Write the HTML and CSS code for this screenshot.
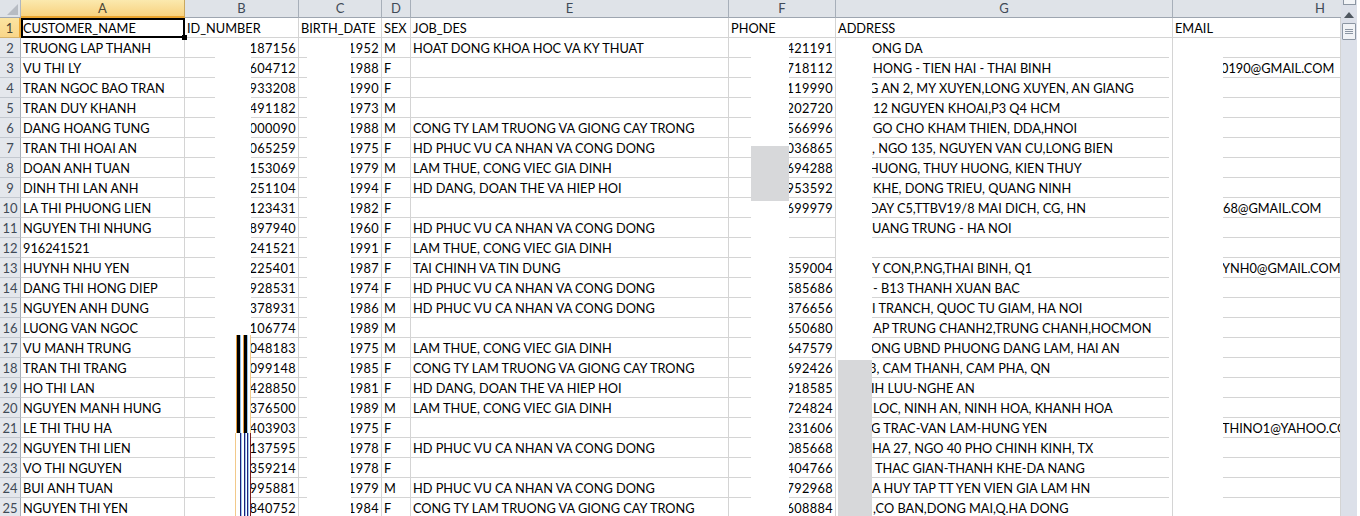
FILE: index.html
```html
<!DOCTYPE html>
<html lang="vi">
<head>
<meta charset="utf-8">
<title>Customer sheet</title>
<link rel="stylesheet" href="styles.css">
</head>
<body>
<div class="window">
  <div class="sheet">
    <table class="grid">
      <colgroup>
        <col class="c-row"><col class="c-a"><col class="c-b"><col class="c-c"><col class="c-d"><col class="c-e"><col class="c-f"><col class="c-g"><col class="c-h">
      </colgroup>
      <thead>
        <tr>
          <th class="corner"><span class="corner-mark"></span></th>
          <th class="active">A</th><th>B</th><th>C</th><th>D</th><th>E</th><th>F</th><th>G</th><th class="right">H</th>
        </tr>
      </thead>
      <tbody>
        <tr><th class="active">1</th><td>CUSTOMER_NAME</td><td>ID_NUMBER</td><td>BIRTH_DATE</td><td>SEX</td><td>JOB_DES</td><td>PHONE</td><td>ADDRESS</td><td>EMAIL</td></tr>
        <tr><th>2</th><td>TRUONG LAP THANH</td><td class="num">0187156</td><td class="num">1952</td><td>M</td><td>HOAT DONG KHOA HOC VA KY THUAT</td><td class="num">8421191</td><td class="addr s1">ONG DA</td><td></td></tr>
        <tr><th>3</th><td>VU THI LY</td><td class="num">1604712</td><td class="num">1988</td><td>F</td><td></td><td class="num">2718112</td><td class="addr">HONG - TIEN HAI - THAI BINH</td><td class="mail s2">0190@GMAIL.COM</td></tr>
        <tr><th>4</th><td>TRAN NGOC BAO TRAN</td><td class="num">1933208</td><td class="num">1990</td><td>F</td><td></td><td class="num">8119990</td><td class="addr s4">G AN 2, MY XUYEN,LONG XUYEN, AN GIANG</td><td></td></tr>
        <tr><th>5</th><td>TRAN DUY KHANH</td><td class="num">2491182</td><td class="num">1973</td><td>M</td><td></td><td class="num">8202720</td><td class="addr">12 NGUYEN KHOAI,P3 Q4 HCM</td><td></td></tr>
        <tr><th>6</th><td>DANG HOANG TUNG</td><td class="num">3000090</td><td class="num">1988</td><td>M</td><td>CONG TY LAM TRUONG VA GIONG CAY TRONG</td><td class="num">5566996</td><td class="addr">GO CHO KHAM THIEN, DDA,HNOI</td><td></td></tr>
        <tr><th>7</th><td>TRAN THI HOAI AN</td><td class="num">2065259</td><td class="num">1975</td><td>F</td><td>HD PHUC VU CA NHAN VA CONG DONG</td><td class="num">8036865</td><td class="addr s1">, NGO 135, NGUYEN VAN CU,LONG BIEN</td><td></td></tr>
        <tr><th>8</th><td>DOAN ANH TUAN</td><td class="num">1153069</td><td class="num">1979</td><td>M</td><td>LAM THUE, CONG VIEC GIA DINH</td><td class="num">5694288</td><td class="addr s4">HUONG, THUY HUONG, KIEN THUY</td><td></td></tr>
        <tr><th>9</th><td>DINH THI LAN ANH</td><td class="num">1251104</td><td class="num">1994</td><td>F</td><td>HD DANG, DOAN THE VA HIEP HOI</td><td class="num">8953592</td><td class="addr">KHE, DONG TRIEU, QUANG NINH</td><td></td></tr>
        <tr><th>10</th><td>LA THI PHUONG LIEN</td><td class="num">2123431</td><td class="num">1982</td><td>F</td><td></td><td class="num">5699979</td><td class="addr s4">DAY C5,TTBV19/8 MAI DICH, CG, HN</td><td class="mail">68@GMAIL.COM</td></tr>
        <tr><th>11</th><td>NGUYEN THI NHUNG</td><td class="num">1897940</td><td class="num">1960</td><td>F</td><td>HD PHUC VU CA NHAN VA CONG DONG</td><td></td><td class="addr s1">UANG TRUNG - HA NOI</td><td></td></tr>
        <tr><th>12</th><td>916241521</td><td class="num">6241521</td><td class="num">1991</td><td>F</td><td>LAM THUE, CONG VIEC GIA DINH</td><td></td><td></td><td></td></tr>
        <tr><th>13</th><td>HUYNH NHU YEN</td><td class="num">1225401</td><td class="num">1987</td><td>F</td><td>TAI CHINH VA TIN DUNG</td><td class="num">7359004</td><td class="addr s1">Y CON,P.NG,THAI BINH, Q1</td><td class="mail s1">YNH0@GMAIL.COM</td></tr>
        <tr><th>14</th><td>DANG THI HONG DIEP</td><td class="num">2928531</td><td class="num">1974</td><td>F</td><td>HD PHUC VU CA NHAN VA CONG DONG</td><td class="num">5585686</td><td class="addr">- B13 THANH XUAN BAC</td><td></td></tr>
        <tr><th>15</th><td>NGUYEN ANH DUNG</td><td class="num">2378931</td><td class="num">1986</td><td>M</td><td>HD PHUC VU CA NHAN VA CONG DONG</td><td class="num">2876656</td><td class="addr s1">I TRANCH, QUOC TU GIAM, HA NOI</td><td></td></tr>
        <tr><th>16</th><td>LUONG VAN NGOC</td><td class="num">1106774</td><td class="num">1989</td><td>M</td><td></td><td class="num">5650680</td><td class="addr">AP TRUNG CHANH2,TRUNG CHANH,HOCMON</td><td></td></tr>
        <tr><th>17</th><td>VU MANH TRUNG</td><td class="num">1048183</td><td class="num">1975</td><td>M</td><td>LAM THUE, CONG VIEC GIA DINH</td><td class="num">4647579</td><td class="addr s2">ONG UBND PHUONG DANG LAM, HAI AN</td><td></td></tr>
        <tr><th>18</th><td>TRAN THI TRANG</td><td class="num">1099148</td><td class="num">1985</td><td>F</td><td>CONG TY LAM TRUONG VA GIONG CAY TRONG</td><td class="num">5692426</td><td class="addr s4">3, CAM THANH, CAM PHA, QN</td><td></td></tr>
        <tr><th>19</th><td>HO THI LAN</td><td class="num">2428850</td><td class="num">1981</td><td>F</td><td>HD DANG, DOAN THE VA HIEP HOI</td><td class="num">7918585</td><td class="addr s2">IH LUU-NGHE AN</td><td></td></tr>
        <tr><th>20</th><td>NGUYEN MANH HUNG</td><td class="num">6376500</td><td class="num">1989</td><td>M</td><td>LAM THUE, CONG VIEC GIA DINH</td><td class="num">2724824</td><td class="addr">LOC, NINH AN, NINH HOA, KHANH HOA</td><td></td></tr>
        <tr><th>21</th><td>LE THI THU HA</td><td class="num">5403903</td><td class="num">1975</td><td>F</td><td></td><td class="num">8231606</td><td class="addr s2">G TRAC-VAN LAM-HUNG YEN</td><td class="mail s1">THINO1@YAHOO.COM</td></tr>
        <tr><th>22</th><td>NGUYEN THI LIEN</td><td class="num">2137595</td><td class="num">1978</td><td>F</td><td>HD PHUC VU CA NHAN VA CONG DONG</td><td class="num">3085668</td><td class="addr s1">HA 27, NGO 40 PHO CHINH KINH, TX</td><td></td></tr>
        <tr><th>23</th><td>VO THI NGUYEN</td><td class="num">1359214</td><td class="num">1978</td><td>F</td><td></td><td class="num">5404766</td><td class="addr s-2">THAC GIAN-THANH KHE-DA NANG</td><td></td></tr>
        <tr><th>24</th><td>BUI ANH TUAN</td><td class="num">1995881</td><td class="num">1979</td><td>M</td><td>HD PHUC VU CA NHAN VA CONG DONG</td><td class="num">2792968</td><td class="addr s1">A HUY TAP TT YEN VIEN GIA LAM HN</td><td></td></tr>
        <tr><th>25</th><td>NGUYEN THI YEN</td><td class="num">1840752</td><td class="num">1984</td><td>F</td><td>CONG TY LAM TRUONG VA GIONG CAY TRONG</td><td class="num">4608884</td><td class="addr">,CO BAN,DONG MAI,Q.HA DONG</td><td></td></tr>
      </tbody>
    </table>

    <div class="cover cover-b"></div>
    <div class="cover cover-c"></div>
    <div class="cover cover-f"></div>
    <div class="cover cover-g"></div>
    <div class="cover cover-g2"></div>
    <div class="cover cover-h"></div>
    <div class="gray gray-f"></div>
    <div class="gray gray-g"></div>
    <div class="bars bars-top"><i></i><i></i></div>
    <div class="bars-low"></div>

    <div class="selection"><span class="handle"></span></div>
  </div>

  <div class="scrollbar">
    <div class="split"></div>
    <svg class="arrow" width="10" height="6" viewBox="0 0 10 6"><path d="M5 0 L10 6 L0 6 Z" fill="#4f5760"/></svg>
    <div class="thumb"><i></i><i></i><i></i></div>
  </div>
</div>
</body>
</html>
```

FILE: styles.css
```css
html, body {
  margin: 0;
  padding: 0;
  height: 516px;
  overflow: hidden;
  background: #fff;
}

.window {
  display: flex;
  width: 1360px;
  height: 516px;
  overflow: hidden;
  font-family: Lato, "Liberation Sans", sans-serif;
  font-size: 12.75px;
  color: #000;
}

.sheet {
  position: relative;
  width: 1341px;
  height: 516px;
  overflow: hidden;
  flex: none;
}

.grid {
  table-layout: fixed;
  border-collapse: separate;
  border-spacing: 0;
  width: 1341px;
}

.c-row { width: 21px; }
.c-a { width: 164px; }
.c-b { width: 114px; }
.c-c { width: 83px; }
.c-d { width: 29px; }
.c-e { width: 318px; }
.c-f { width: 107px; }
.c-g { width: 337px; }
.c-h { width: 168px; }

thead th {
  height: 17px;
  padding: 0;
  background: #dfe3e8;
  border-right: 1px solid #a7afb9;
  border-bottom: 1px solid #9ea6b0;
  font-weight: 400;
  font-size: 13px;
  color: #3f4a57;
  text-align: center;
  line-height: 17px;
}

thead th.right {
  border-right: 0;
  text-align: right;
  padding-right: 16px;
}

thead th.corner {
  position: relative;
  background: #dfe3e8;
  border-right: 1px solid #b0b7c0;
}

.corner-mark {
  position: absolute;
  right: 2px;
  bottom: 2px;
  width: 0;
  height: 0;
  border-left: 11px solid transparent;
  border-bottom: 11px solid #b7bcc3;
}

thead th.active {
  background: linear-gradient(#fbe9ae, #f8d27f);
  border-right: 1px solid #c9a860;
  border-bottom: 2px solid #eba52f;
  height: 16px;
  line-height: 16px;
  color: #4a4636;
}

tbody th {
  height: 18px;
  padding: 1px 0 0;
  background: #e4e7ec;
  border-right: 1px solid #a7afb9;
  border-bottom: 1px solid #c3c8cf;
  font-weight: 400;
  font-size: 13px;
  color: #3f4a57;
  text-align: center;
  line-height: 18px;
}

tbody th.active {
  background: linear-gradient(#fbe4a0, #f9d68a);
  border-right: 2px solid #eba52f;
  border-bottom-color: #d4b26c;
  color: #4a4636;
}

tbody td {
  height: 18px;
  padding: 1px 2px 0;
  border-right: 1px solid #d4d4d4;
  border-bottom: 1px solid #d4d4d4;
  white-space: nowrap;
  overflow: hidden;
  line-height: 18px;
  box-sizing: content-box;
}

tbody td.num {
  text-align: right;
  padding-right: 2px;
  letter-spacing: 0.35px;
}

tbody td.addr { padding-left: 37px; }
tbody td.addr.s1 { padding-left: 36px; }
tbody td.addr.s2 { padding-left: 35px; }
tbody td.addr.s4 { padding-left: 33px; }
tbody td.addr.s-2 { padding-left: 39px; }

tbody td.mail { padding-left: 50px; overflow: hidden; }
tbody td.mail.s1 { padding-left: 49px; }
tbody td.mail.s2 { padding-left: 48px; }

/* redaction patches painted over the sheet */
.cover {
  position: absolute;
  top: 38px;
  bottom: 0;
  background: #fff;
}

.cover-b { left: 215px; width: 36px; }
.cover-c { left: 307px; width: 44px; }
.cover-f { left: 751px; width: 38px; }
.cover-g { left: 836px; width: 36px; }
.cover-g2 { left: 1169px; width: 3px; }
.cover-h { left: 1173px; width: 50px; }

.gray {
  position: absolute;
  background: #d7d8da;
}

.gray-f { left: 751px; top: 146px; width: 38px; height: 55px; }
.gray-g { left: 838px; top: 360px; width: 34px; height: 156px; }

.bars {
  position: absolute;
  top: 335px;
  left: 236px;
  width: 15px;
  height: 98px;
  box-sizing: border-box;
  border-right: 1px solid #f4cd8c;
  display: flex;
  gap: 2px;
}

.bars i {
  display: block;
  width: 3px;
  background: #000;
  border-left: 1px solid #e39a3a;
  border-right: 1px solid #8fc3ea;
}

.bars-low {
  position: absolute;
  top: 433px;
  left: 235px;
  width: 16px;
  bottom: 0;
  background: linear-gradient(90deg, #f2c98a 0 1px, #fff 1px 5px, #20207a 5px 6px, #9cc6ee 6px 7px, #fff 7px 9px, #20207a 9px 10px, #9cc6ee 10px 11px, #fff 11px 12px, #20207a 12px 13px, #9cc6ee 13px 14px, #fff 14px 15px, #7a1c1c 15px 16px);
}

.selection {
  position: absolute;
  left: 21px;
  top: 18px;
  width: 164px;
  height: 20px;
  box-sizing: border-box;
  border: 2px solid #000;
}

.handle {
  position: absolute;
  right: -4px;
  bottom: -4px;
  width: 5px;
  height: 5px;
  background: #000;
}

.scrollbar {
  position: relative;
  width: 16px;
  height: 516px;
  flex: none;
  background: #dce0e9;
}

.split {
  position: absolute;
  left: 2px;
  top: -3px;
  width: 11px;
  height: 6px;
  border: 1px solid #8c96a3;
  background: #f2f4f7;
}

.arrow {
  position: absolute;
  left: 3px;
  top: 12px;
}

.thumb {
  position: absolute;
  left: 1px;
  top: 23px;
  width: 12px;
  height: 15px;
  border: 1px solid #8c96a3;
  border-radius: 1px;
  background: #f1f3f6;
  display: flex;
  flex-direction: column;
  align-items: center;
  justify-content: center;
  gap: 1px;
}

.thumb i {
  display: block;
  width: 8px;
  height: 1px;
  background: #8c96a3;
}
```
